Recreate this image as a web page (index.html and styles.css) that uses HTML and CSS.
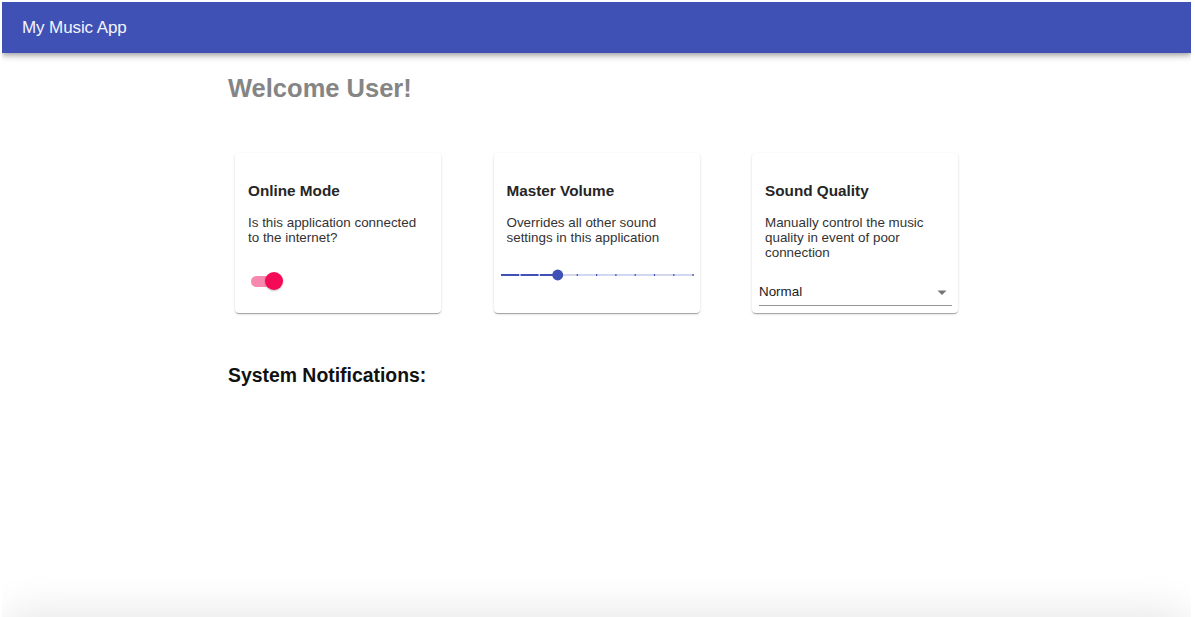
FILE: index.html
```html
<!DOCTYPE html>
<html lang="en">
<head>
<meta charset="utf-8">
<title>My Music App</title>
<link rel="stylesheet" href="styles.css">
</head>
<body>
<div class="window">
  <header class="appbar">
    <h1 class="appbar-title">My Music App</h1>
  </header>
  <main class="content">
    <h2 class="welcome">Welcome User!</h2>
    <section class="cards">
      <div class="card">
        <h3 class="card-title">Online Mode</h3>
        <p class="card-text">Is this application connected to the internet?</p>
        <div class="switch-row">
          <span class="switch">
            <span class="switch-track"></span>
            <span class="switch-thumb"></span>
          </span>
        </div>
      </div>
      <div class="card">
        <h3 class="card-title">Master Volume</h3>
        <p class="card-text">Overrides all other sound settings in this application</p>
        <div class="slider">
          <svg class="slider-svg" width="194" height="20" viewBox="0 0 194 20">
            <line x1="0" y1="10" x2="194" y2="10" stroke="#3f51b5" stroke-opacity="0.45" stroke-width="1"/>
            <line x1="0" y1="10" x2="57" y2="10" stroke="#3f51b5" stroke-width="2"/>
            <g fill="#ffffff">
              <rect x="18.4" y="8.5" width="1.2" height="3"/>
              <rect x="37.8" y="8.5" width="1.2" height="3"/>
            </g>
            <g fill="#3f51b5">
              <rect x="76.1" y="9" width="1.2" height="2"/>
              <rect x="95.5" y="9" width="1.2" height="2"/>
              <rect x="114.9" y="9" width="1.2" height="2"/>
              <rect x="134.3" y="9" width="1.2" height="2"/>
              <rect x="153.7" y="9" width="1.2" height="2"/>
              <rect x="173.1" y="9" width="1.2" height="2"/>
              <rect x="192.5" y="9" width="1.2" height="2"/>
            </g>
            <circle cx="57" cy="10" r="5.5" fill="#3f51b5"/>
          </svg>
        </div>
      </div>
      <div class="card">
        <h3 class="card-title">Sound Quality</h3>
        <p class="card-text">Manually control the music quality in event of poor connection</p>
        <div class="select">
          <span class="select-value">Normal</span>
          <svg class="select-arrow" width="10" height="6" viewBox="0 0 10 6"><path d="M0.5 0.5 L9.5 0.5 L5 5 Z" fill="#757575"/></svg>
        </div>
      </div>
    </section>
    <h2 class="notifications">System Notifications:</h2>
  </main>
  <div class="bottom-shade"></div>
</div>
</body>
</html>
```

FILE: styles.css
```css
* { box-sizing: border-box; }

html, body {
  margin: 0;
  padding: 0;
  background: #ffffff;
  height: 100%;
  overflow: hidden;
}

body {
  font-family: "Liberation Sans", Arial, Helvetica, sans-serif;
  color: rgba(0, 0, 0, 0.87);
}

.window {
  margin: 2px 4px 0 2px;
  height: 615px;
  overflow: hidden;
  position: relative;
}

.appbar {
  height: 51px;
  background: #3f51b5;
  display: flex;
  align-items: center;
  padding-left: 20px;
  box-shadow: 0 2px 4px -1px rgba(0,0,0,0.2), 0 4px 5px 0 rgba(0,0,0,0.14), 0 1px 10px 0 rgba(0,0,0,0.12);
}

.appbar-title {
  margin: 0;
  font-size: 17px;
  font-weight: 400;
  color: #f4f5fb;
  letter-spacing: -0.1px;
  padding-top: 1px;
}

.content {
  padding-left: 226px;
}

.welcome {
  margin: 20px 0 0 0;
  font-size: 25.5px;
  line-height: 30px;
  font-weight: 700;
  color: #858585;
}

.cards {
  display: flex;
  gap: 52.5px;
  margin-top: 50px;
  padding-left: 7px;
}

.card {
  width: 206px;
  height: 160px;
  background: #fff;
  border-radius: 4px;
  box-shadow: 0 2px 1px -1px rgba(0,0,0,0.2), 0 1px 1px 0 rgba(0,0,0,0.14), 0 1px 3px 0 rgba(0,0,0,0.12);
  padding: 28px 6px 0 7px;
  display: flex;
  flex-direction: column;
}

.card-title {
  margin: 0 0 0 6px;
  font-size: 15.3px;
  line-height: 20px;
  font-weight: 700;
  color: #262626;
}

.card-text {
  margin: 14px 12px 0 6px;
  font-size: 13.4px;
  line-height: 15px;
  color: #333;
}

.switch-row {
  margin-top: 26px;
  padding-left: 9px;
  height: 20px;
  display: flex;
  align-items: center;
}

.switch {
  position: relative;
  width: 32px;
  height: 20px;
  display: inline-block;
}

.switch-track {
  position: absolute;
  left: 0;
  top: 5px;
  width: 26px;
  height: 11px;
  border-radius: 6px;
  background: #f789b0;
}

.switch-thumb {
  position: absolute;
  left: 14px;
  top: 1px;
  width: 18px;
  height: 18px;
  border-radius: 50%;
  background: #f50a57;
  box-shadow: 0 1px 2px rgba(0,0,0,0.25);
}

.slider {
  margin-top: 20px;
  height: 20px;
  display: flex;
}

.slider-svg {
  display: block;
}

.select {
  margin-top: 23px;
  height: 23px;
  border-bottom: 1px solid rgba(0,0,0,0.42);
  display: flex;
  align-items: flex-start;
  justify-content: space-between;
  padding-right: 5px;
}

.select-value {
  font-size: 13.4px;
  line-height: 18px;
  color: #222;
}

.select-arrow {
  margin-top: 7px;
}

.notifications {
  margin: 51px 0 0 0;
  font-size: 19.4px;
  line-height: 23px;
  font-weight: 700;
  color: #111;
}

.bottom-shade {
  position: absolute;
  left: 14px;
  right: 14px;
  top: 625px;
  height: 30px;
  border-radius: 40px;
  box-shadow: 0 0 40px 18px rgba(0,0,0,0.09);
}
```
